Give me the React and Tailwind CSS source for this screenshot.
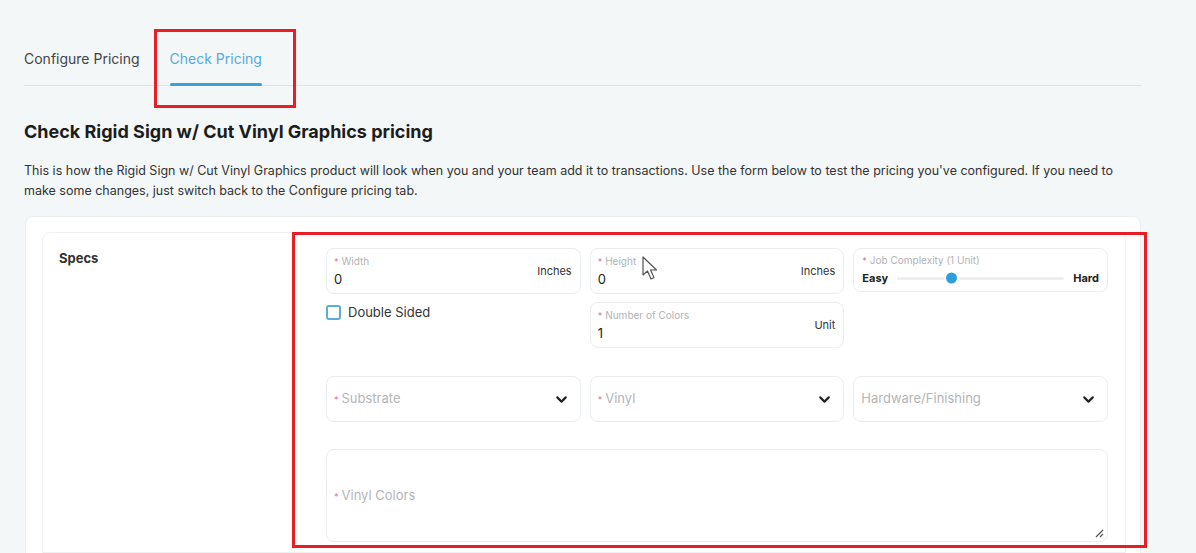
import { ChevronDown } from 'lucide-react';

const font = { fontFamily: 'Inter, "Noto Sans", sans-serif' };

function Req() {
  return <span className="mr-[3px] text-[9px] text-[#d9738a]">*</span>;
}

function NumberField({ label, value, unit }) {
  return (
    <div className="flex h-[46px] items-center justify-between rounded-lg border border-[#eaedef] bg-white pl-[7px] pr-[8px]">
      <div className="flex flex-col">
        <span className="text-[10px] leading-[12px] text-[#b0b3b6]">
          <Req />
          {label}
        </span>
        <span className="mt-[3px] text-[13px] leading-[16px] text-[#222]">{value}</span>
      </div>
      <span className="text-[11px] text-[#333]">{unit}</span>
    </div>
  );
}

function SelectField({ label, required = true }) {
  return (
    <div className="flex h-[46px] items-center justify-between rounded-lg border border-[#eaedef] bg-white pl-[7px] pr-[10px]">
      <span className="text-[13px] text-[#b3b5b8]">
        {required ? <Req /> : null}
        {label}
      </span>
      <ChevronDown size={17} strokeWidth={3} className="text-[#222]" />
    </div>
  );
}

function Complexity() {
  return (
    <div className="flex h-[44px] flex-col justify-center rounded-lg border border-[#eaedef] bg-white px-[8px]">
      <span className="text-[10px] leading-[12px] text-[#b0b3b6]">
        <Req />
        Job Complexity (1 Unit)
      </span>
      <div className="mt-[3px] flex items-center">
        <span className="text-[11px] font-bold text-[#222]">Easy</span>
        <div className="relative mx-[9px] h-[3px] flex-1 rounded bg-[#eceff0]">
          <div className="absolute left-[49px] top-1/2 h-[11px] w-[11px] -translate-y-1/2 rounded-full bg-[#2f9fdc] ring-2 ring-white" />
        </div>
        <span className="text-[11px] font-bold text-[#222]">Hard</span>
      </div>
    </div>
  );
}

export default function App() {
  return (
    <div className="relative min-h-[553px] overflow-hidden bg-[#f3f7f8] pl-[24px] pr-[55px] pt-[48px]" style={font}>
      {/* tabs */}
      <div className="flex gap-[30px] border-b border-[#dfe3e5]">
        <div className="pb-[16px] text-[14px] text-[#444]">Configure Pricing</div>
        <div className="relative pb-[16px] text-[14px] text-[#55abd8]">
          Check Pricing
          <div className="absolute bottom-[-1px] left-0 right-0 h-[3px] rounded-full bg-[#3c9fd6]" />
        </div>
      </div>

      <h1 className="mt-[34px] text-[18px] font-bold leading-[24px] text-[#1c1c1c]">
        Check Rigid Sign w/ Cut Vinyl Graphics pricing
      </h1>
      <p className="mt-[17px] text-[12.5px] leading-[20px] text-[#333]">
        This is how the Rigid Sign w/ Cut Vinyl Graphics product will look when you and your team add it to transactions. Use the form below to test the pricing you've configured. If you need to make some changes, just switch back to the Configure pricing tab.
      </p>

      {/* outer card */}
      <div className="mt-[15px] ml-[1px] rounded-t-lg border border-[#eceff1] bg-white pl-[16px] pr-[14px] pt-[15px]">
        <div className="flex rounded-t-lg border border-[#eef0f2] pb-[10px] pl-[16px] pr-[17px] pt-[15px]">
          <div className="w-[267px] pt-[1px] text-[13px] font-bold text-[#333]">Specs</div>
          <div className="flex-1">
            <div className="grid grid-cols-3 gap-x-[9px] gap-y-[8px]">
              <NumberField label="Width" value="0" unit="Inches" />
              <NumberField label="Height" value="0" unit="Inches" />
              <Complexity />
              <label className="flex items-start gap-[7px] pt-[3px]">
                <span className="h-[15px] w-[15px] rounded-[3px] border-2 border-[#5aaed6] bg-white" />
                <span className="text-[13px] leading-[15px] text-[#333]">Double Sided</span>
              </label>
              <NumberField label="Number of Colors" value="1" unit="Unit" />
              <div />
            </div>
            <div className="mt-[28px] grid grid-cols-3 gap-x-[9px]">
              <SelectField label="Substrate" />
              <SelectField label="Vinyl" />
              <SelectField label="Hardware/Finishing" required={false} />
            </div>
            <div className="relative mt-[27px] flex h-[93px] items-center rounded-lg border border-[#eaedef] pl-[7px]">
              <span className="text-[13px] text-[#b3b5b8]">
                <Req />
                Vinyl Colors
              </span>
              <svg className="absolute bottom-[3px] right-[3px]" width="9" height="9" viewBox="0 0 9 9">
                <path d="M8 1L1 8M8 5L5 8" stroke="#555" strokeWidth="1.2" />
              </svg>
            </div>
          </div>
        </div>
      </div>

      {/* mouse cursor */}
      <svg className="absolute left-[642px] top-[256px]" width="18" height="26" viewBox="0 0 18 26">
        <path d="M1 1 L1 19 L5.5 15 L9 23 L12 21.5 L8.5 14 L14.5 14 Z" fill="white" stroke="#555" strokeWidth="1.2" strokeLinejoin="round" />
      </svg>

      {/* red highlights */}
      <div className="pointer-events-none absolute left-[154px] top-[29px] h-[79px] w-[142px] border-[3px] border-[#e81e25]" />
      <div className="pointer-events-none absolute left-[292px] top-[232px] h-[316px] w-[855px] border-[3px] border-[#e81e25]" />
    </div>
  );
}
